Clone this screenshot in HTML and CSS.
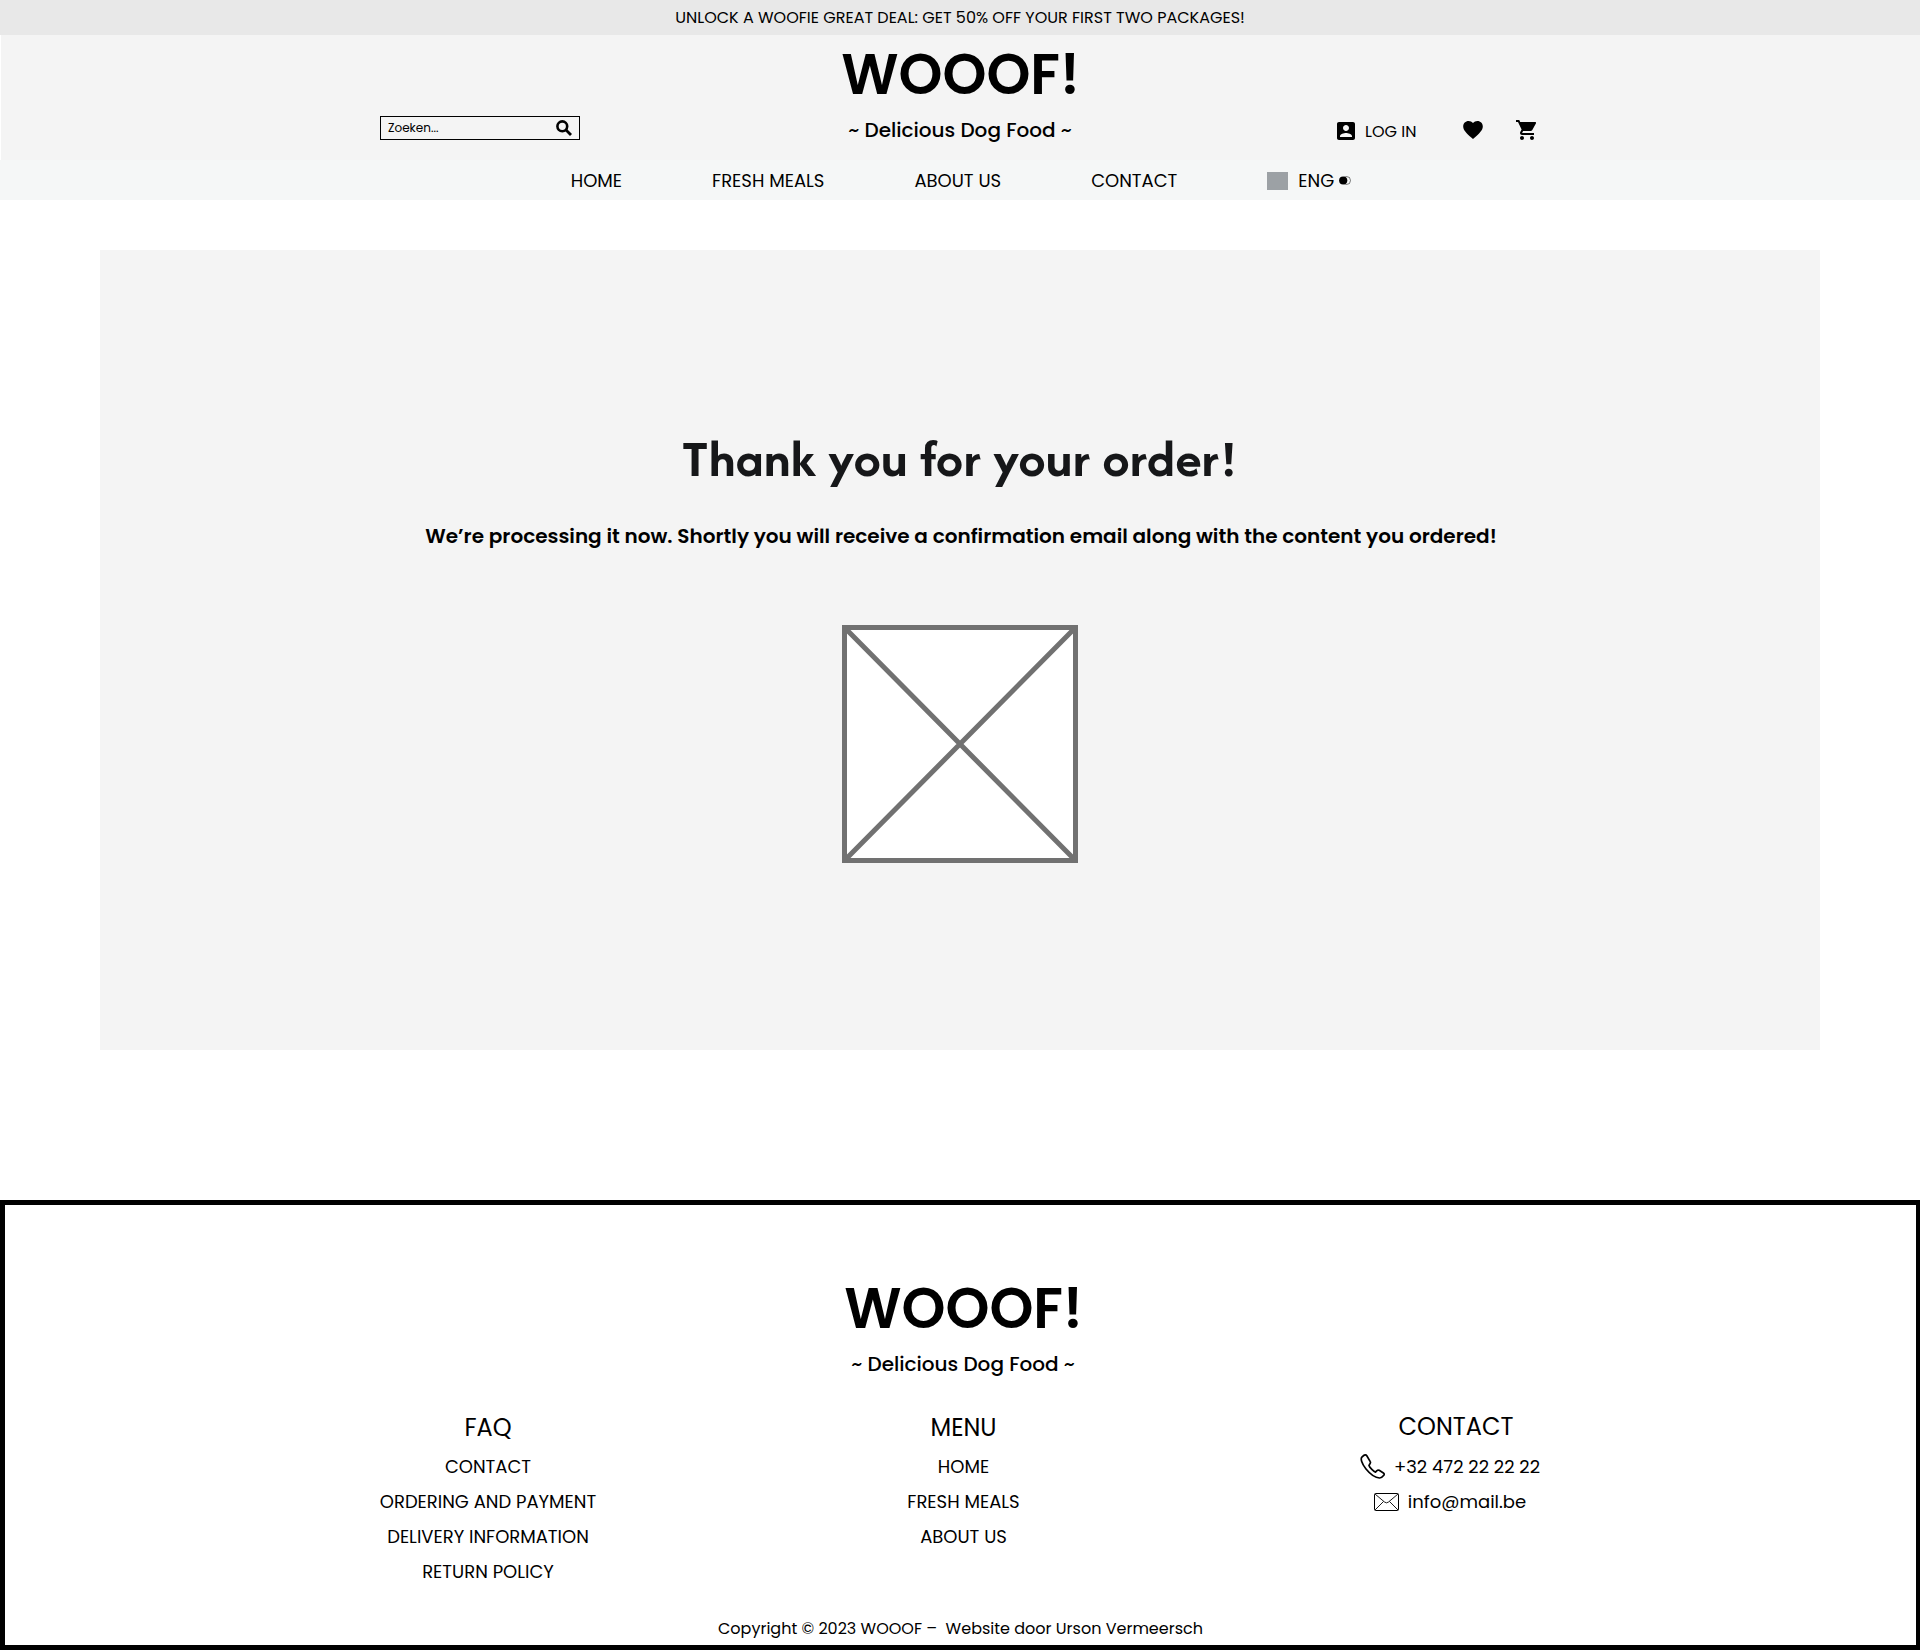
FILE: index.html
```html
<!DOCTYPE html>
<html lang="en">
<head>
<meta charset="utf-8">
<title>WOOOF! – Thank you</title>
<link rel="stylesheet" href="styles.css">
</head>
<body>
<div class="banner">UNLOCK A WOOFIE GREAT DEAL: GET 50% OFF YOUR FIRST TWO PACKAGES!</div>
<header class="header">
  <div class="search"><span>Zoeken...</span>
    <svg class="search-icon" viewBox="0 0 16 16"><circle cx="6.3" cy="6.3" r="4.9" fill="none" stroke="#000" stroke-width="2.6"/><path d="M9.8 9.8l5.2 5.2" stroke="#000" stroke-width="2.8"/></svg>
  </div>
  <div class="brand"><div class="logo">WOOOF!</div><div class="tagline">~ Delicious Dog Food ~</div></div>
  <div class="actions">
    <svg class="account" viewBox="3 3 18 18"><path d="M3 5v14c0 1.1.89 2 2 2h14c1.1 0 2-.9 2-2V5c0-1.1-.9-2-2-2H5c-1.11 0-2 .9-2 2zm12 4c0 1.66-1.34 3-3 3s-3-1.34-3-3 1.34-3 3-3 3 1.34 3 3zm-9 8c0-2 4-3.1 6-3.1s6 1.1 6 3.1v1H6v-1z"/></svg>
    <span class="login">LOG IN</span>
    <svg class="heart" viewBox="2 3 20 18.35"><path d="M12 21.35l-1.45-1.32C5.4 15.36 2 12.28 2 8.5 2 5.42 4.42 3 7.5 3c1.74 0 3.41.81 4.5 2.09C13.09 3.81 14.76 3 16.5 3 19.58 3 22 5.42 22 8.5c0 3.78-3.4 6.86-8.55 11.54L12 21.35z"/></svg>
    <svg class="cart" viewBox="1 2 20 20"><path d="M7 18c-1.1 0-1.99.9-1.99 2S5.9 22 7 22s2-.9 2-2-.9-2-2-2zM1 2v2h2l3.6 7.59-1.35 2.45c-.16.28-.25.61-.25.96 0 1.1.9 2 2 2h12v-2H7.42c-.14 0-.25-.11-.25-.25l.03-.12.9-1.63h7.45c.75 0 1.41-.41 1.75-1.03l3.58-6.49A1.003 1.003 0 0 0 20 4H5.21l-.94-2H1zm16 16c-1.1 0-1.99.9-1.99 2s.89 2 1.99 2 2-.9 2-2-.9-2-2-2z"/></svg>
  </div>
</header>
<nav class="nav">
  <a>HOME</a>
  <a>FRESH MEALS</a>
  <a>ABOUT US</a>
  <a>CONTACT</a>
  <div class="lang"><span class="flag"></span><span>ENG</span>
    <svg class="toggle" viewBox="0 0 12 9"><circle cx="7.5" cy="4.5" r="4" fill="none" stroke="#000" stroke-width=".5"/><circle cx="4.2" cy="4.5" r="4.1"/></svg>
  </div>
</nav>
<main class="card">
  <h1 class="title">Thank you for your order!</h1>
  <p class="message">We’re processing it now. Shortly you will receive a confirmation email along with the content you ordered!</p>
  <svg class="placeholder" viewBox="0 0 236 238"><path d="M2.5 2.5h231v233h-231z" fill="#fff"/><path d="M2.5 2.5h231v233h-231zM4 4l228 230M232 4L4 234" fill="none" stroke="#717171" stroke-width="5"/></svg>
</main>
<footer class="footer">
  <div class="brand"><div class="logo">WOOOF!</div><div class="tagline">~ Delicious Dog Food ~</div></div>
  <div class="columns">
    <section class="column">
      <h2>FAQ</h2>
      <a>CONTACT</a>
      <a>ORDERING AND PAYMENT</a>
      <a>DELIVERY INFORMATION</a>
      <a>RETURN POLICY</a>
    </section>
    <section class="column">
      <h2>MENU</h2>
      <a>HOME</a>
      <a>FRESH MEALS</a>
      <a>ABOUT US</a>
    </section>
    <section class="column contact">
      <h2>CONTACT</h2>
      <a><svg class="phone" viewBox="0 0 25 25"><path d="M3.7 1.5 1.9 3.1C.4 4.7 1.5 9.5 6 15c4.5 5.5 10 8.8 13.5 9 1.8.1 3-1 4.3-2.7.6-.9.4-1.7-.4-2.3l-4.2-2.7c-.9-.5-1.7-.3-2.3.4l-1.4 1.5c-1.7-.4-5.9-4.7-6.5-6.7L10 9.7c.6-.7.6-1.5.1-2.3L6.8 1.7c-.7-1-2.2-1-3.1-.2z" fill="none" stroke="#000" stroke-width="1.7" stroke-linejoin="round"/></svg>+32 472 22 22 22</a>
      <a><svg class="mail" viewBox="0 0 25 18"><g fill="none" stroke="#000"><rect x=".5" y=".5" width="24" height="17" rx="1"/><path d="M1 1l9.5 8q2 1.7 4 0L24 1M1 17l8.5-8.5M24 17l-8.5-8.5" stroke-width=".9"/></g></svg>info@mail.be</a>
    </section>
  </div>
  <p class="copyright">Copyright © 2023 WOOOF –&nbsp; Website door Urson Vermeersch</p>
</footer>
</body>
</html>
```
FILE: styles.css
```css
*{box-sizing:border-box}
body{margin:0;width:1920px;background:#fff;color:#000;font-family:Poppins,Inter,sans-serif;font-size:18px}
h1,h2,p{margin:0;font-weight:400}
svg{display:block;flex:none}
.banner{height:35px;line-height:35px;background:#e8e8e8;text-align:center;font-size:16px}
.header{height:125px;margin-left:1px;padding:0 384px 0 379px;background:#f4f4f4;display:grid;grid-template-columns:200px 1fr 199px}
.search{height:24px;margin-top:81px;border:1px solid #000;padding:0 7px;display:flex;align-items:center;justify-content:space-between;font-size:12px}
.search-icon{width:16px;height:16px}
.brand{text-align:center;padding:7px 0 0 3px}
.logo{font-size:56px;line-height:66px;font-weight:600;padding-left:1px}
.tagline{font-size:20px;line-height:28px;font-weight:500;margin-top:8px}
.actions{display:flex;align-items:center;height:28px;margin-top:82px}
.account{width:18px;height:18px}
.login{margin-left:10px;font-size:16px}
.heart{width:20px;height:18px;margin:0 0 2px auto}
.cart{width:20px;height:20px;margin:0 0 2px 33px}
.nav{height:40px;background:#f5f7f7;display:flex;justify-content:center;align-items:center;gap:90px;padding-left:2px}
.lang{display:flex;align-items:center}
.flag{width:21px;height:18px;background:#9ca1a5;margin:2px 10px 0 0}
.toggle{width:12px;height:9px;margin-left:5px}
.card{width:1720px;height:800px;margin:50px auto 150px;padding-top:178px;background:#f4f4f4;text-align:center}
.title{font:700 54px/60px Afacad,Jost,sans-serif;letter-spacing:.55px;color:#161719}
.message{font-size:20px;font-weight:600;line-height:30px;margin-top:33px;padding-left:2px}
.placeholder{width:236px;height:238px;margin:74px auto 0}
.footer{height:450px;border:5px solid #000;border-right-width:4px;padding-top:64px;display:flex;flex-direction:column}
.footer .brand{padding-left:5px}
.columns{display:grid;grid-template-columns:216px 735px 238px;padding-left:375px;margin-top:32px}
.column{display:flex;flex-direction:column;align-items:center;line-height:35px}
.column h2{font-size:24px;line-height:36px;margin-bottom:3px}
.column.contact h2{line-height:34px;margin-bottom:5px;padding-left:12px}
.column a{display:flex;align-items:center;white-space:nowrap}
.phone{width:25px;height:25px;margin-right:9px}
.mail{width:25px;height:18px;margin-right:9px}
.copyright{margin-top:auto;text-align:center;font-size:16px;line-height:24px;padding-bottom:4px}
```
